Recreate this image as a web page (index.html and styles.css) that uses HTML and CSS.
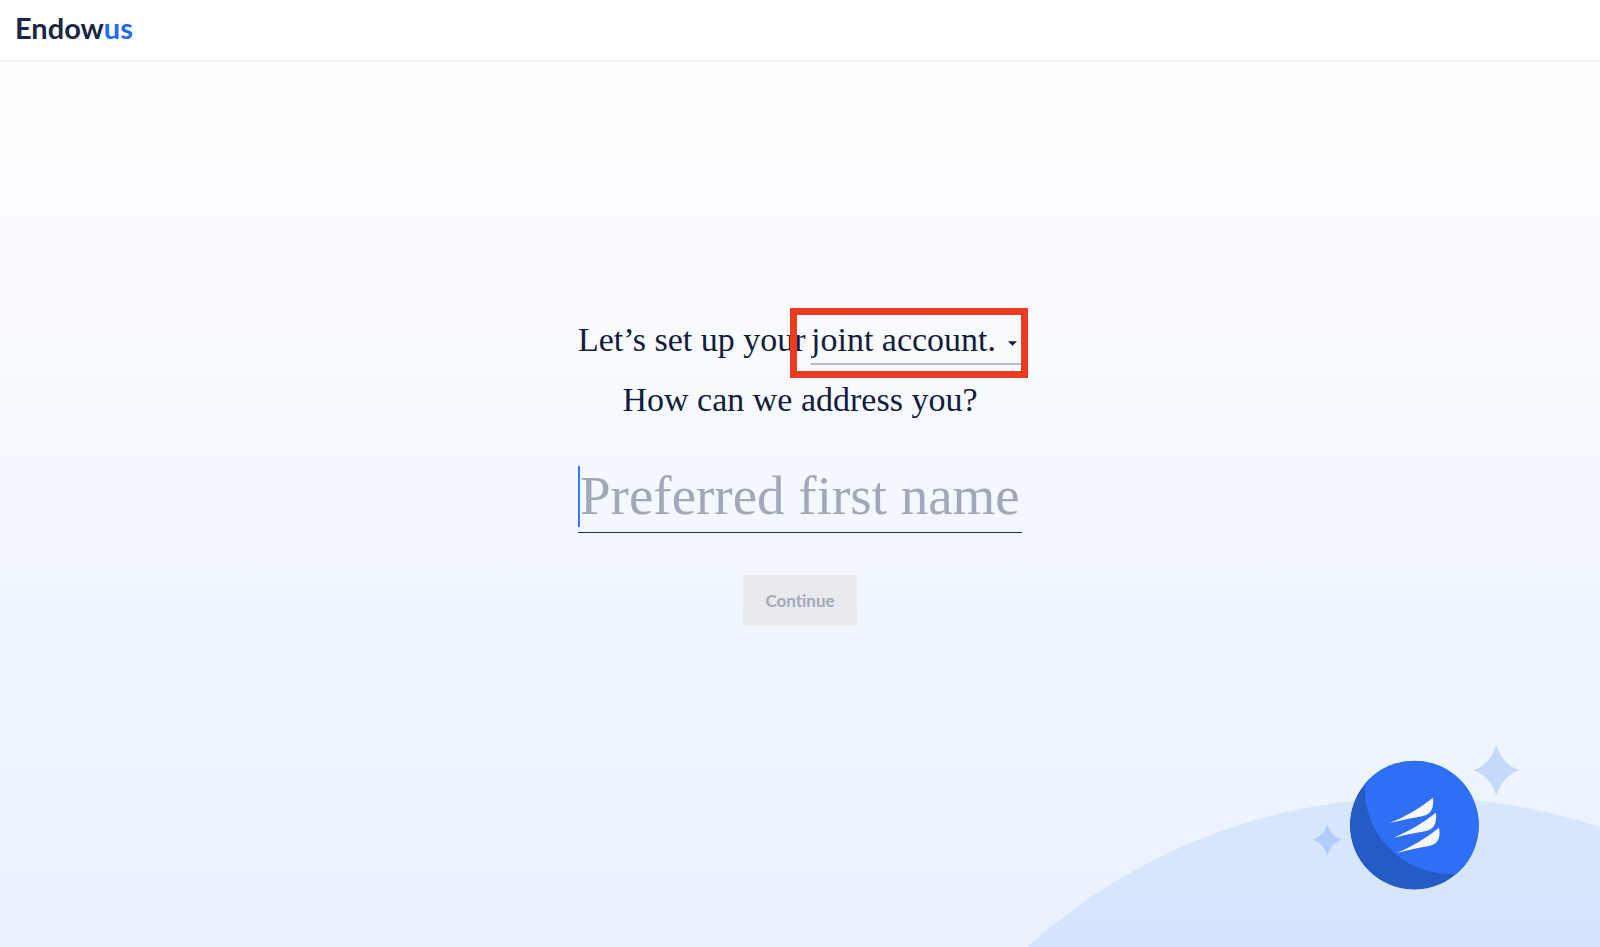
FILE: index.html
```
<!DOCTYPE html>
<html lang="en">
<head>
    <meta charset="UTF-8">
    <meta name="viewport" content="width=device-width, initial-scale=1.0">
    <title>Endowus</title>
    <link rel="stylesheet" href="styles.css">
</head>
<body>
    <header class="header">
        <a class="logo" href="#">Endow<span>us</span></a>
    </header>
    <main class="main">
        <form class="setup">
            <div class="row">
                <label for="accountType">Let’s set up your</label>
                <div class="account">
                    <select id="accountType">
                        <option>joint account.</option>
                        <option>personal account.</option>
                    </select>
                    <svg class="arrow" viewBox="0 0 10 5" aria-hidden="true"><path d="M0 0h10L5 5z"/></svg>
                </div>
            </div>
            <label class="question" for="firstName">How can we address you?</label>
            <div class="field">
                <input type="text" id="firstName" placeholder="Preferred first name">
            </div>
            <button type="submit" disabled>Continue</button>
        </form>

        <!-- hill, coin and sparkles -->
        <svg class="scene" viewBox="0 0 600 220" aria-hidden="true">
            <defs>
                <clipPath id="coin"><circle cx="414.3" cy="98.2" r="64.5"/></clipPath>
                <linearGradient id="hill" x1="0" y1="70" x2="0" y2="220" gradientUnits="userSpaceOnUse">
                    <stop offset="0" stop-color="#d9e7fd"/>
                    <stop offset="1" stop-color="#d5e3fd"/>
                </linearGradient>
            </defs>
            <circle cx="416.4" cy="651.3" r="581" fill="url(#hill)"/>
            <g clip-path="url(#coin)">
                <circle cx="414.3" cy="98.2" r="64.5" fill="#255bc4"/>
                <path d="M365 0V56A85.3 85.3 0 0 0 450.3 147H500V0z" fill="#2f6ff6"/>
            </g>
            <g transform="translate(300 3) scale(.3333)">
                <g fill="#f8faff">
                    <path d="M269 279Q343 249 399 203Q402 229 392 244Q384 256 366 259Q315 268 269 279z"/>
                    <path d="M281 323Q352 293 408 248Q411 274 401 289Q393 301 375 304Q325 312 281 323z"/>
                    <path d="M290 369Q361 339 417 293Q422 319 412 334Q404 345 386 348Q334 357 290 369z"/>
                </g>
                <path d="M589 44Q607 105 660 121Q607 137 589 198Q571 137 519 121Q571 105 589 44z" fill="#c5d9fd"/>
                <path d="M82 283Q92 319 125 329Q92 339 82 376Q72 339 38 329Q72 319 82 283z" fill="#b2cdfc"/>
            </g>
        </svg>
    </main>
</body>
</html>
```

FILE: styles.css
```
* { box-sizing: border-box; }
body { margin: 0; min-height: 100vh; display: flex; flex-direction: column; color: #131c3a; font-family: "Liberation Serif", serif; }

.header { height: 62px; padding: 0 15px; display: flex; align-items: center; background: #fff; border-bottom: 2px solid #f1f2f3; }
.logo { color: #1a2744; font-family: Lato, sans-serif; font-size: 29px; font-weight: bold; line-height: 56px; padding-bottom: 4px; text-decoration: none; }
.logo span { color: #2269f8; }

.main { flex: 1; position: relative; overflow: hidden; padding: 248px 20px 240px; background: linear-gradient(#fdfeff, #f9fbff 30%, #f0f6ff 62%, #eef5ff 80%, #eaf1fe); }
.setup { max-width: 444px; margin: 0 auto; display: flex; flex-direction: column; align-items: center; font-size: 34px; line-height: 60px; }
.row { width: 100%; display: flex; justify-content: space-between; align-items: flex-start; white-space: nowrap; }

.account { position: relative; width: 211px; height: 60px; display: flex; align-items: flex-start; }
.account select { width: 100%; height: 55px; padding: 6px 0 0; appearance: none; background: transparent; border: none; border-bottom: 2px solid #b4bccb; border-radius: 0; color: inherit; font: inherit; line-height: 40px; outline: none; }
.arrow { position: absolute; right: 5px; top: 31px; width: 9px; height: 5px; fill: #131c3a; pointer-events: none; }
/* red highlight around the account type */
.account::after { content: ""; position: absolute; top: -2px; right: -6px; bottom: -8px; left: -21px; border: 7px solid #eb3c1f; pointer-events: none; }

.field { position: relative; width: 100%; margin-top: 34px; }
.field::before { content: ""; position: absolute; left: 0; top: 2px; width: 2px; height: 61px; background: #3b78f7; }
.field input { display: block; width: 100%; height: 69px; padding: 0 0 6px 2px; background: transparent; border: none; border-bottom: 1px solid #263554; color: inherit; font-family: inherit; font-size: 55px; outline: none; }
.field input::placeholder { color: #a1a9b8; opacity: 1; }

button { height: 51px; margin-top: 42px; padding: 0 22px; border: none; border-radius: 4px; background: #e9eaed; color: #a1a9b8; font-family: Lato, sans-serif; font-size: 17px; font-weight: bold; font-variant-ligatures: none; }

.scene { position: absolute; right: 0; bottom: 0; width: 600px; height: 220px; }
```
